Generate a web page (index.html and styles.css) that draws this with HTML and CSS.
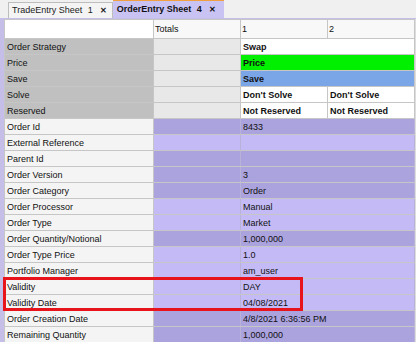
FILE: index.html
```html
<!DOCTYPE html>
<html lang="en">
<head>
    <meta charset="UTF-8">
    <title>OrderEntry</title>
    <link rel="stylesheet" href="styles.css">
</head>
<body>
<div class="tabs">
    <div class="tab">TradeEntry Sheet <span class="num">1</span><span class="close">&#x2715;</span></div>
    <div class="tab active">OrderEntry Sheet <span class="num">4</span><span class="close">&#x2715;</span></div>
</div>
<div class="sheet">
    <table class="grid">
        <colgroup>
            <col class="c-label">
            <col class="c-val">
            <col class="c-val">
            <col class="c-val">
        </colgroup>
        <tr class="head">
            <td class="hlabel"></td>
            <td>Totals</td>
            <td>1</td>
            <td>2</td>
        </tr>
        <tr class="top">
            <td class="label">Order Strategy</td><td class="tot"></td>
            <td colspan="2" class="white bold">Swap</td>
        </tr>
        <tr class="top">
            <td class="label">Price</td><td class="tot"></td>
            <td colspan="2" class="green bold">Price</td>
        </tr>
        <tr class="top">
            <td class="label">Save</td><td class="tot"></td>
            <td colspan="2" class="blue bold">Save</td>
        </tr>
        <tr class="top">
            <td class="label">Solve</td><td class="tot"></td>
            <td class="white bold">Don't Solve</td><td class="white bold">Don't Solve</td>
        </tr>
        <tr class="top">
            <td class="label">Reserved</td><td class="tot"></td>
            <td class="white bold">Not Reserved</td><td class="white bold">Not Reserved</td>
        </tr>
        <tr class="dark"><td class="label">Order Id</td><td></td><td colspan="2">8433</td></tr>
        <tr class="light"><td class="label">External Reference</td><td></td><td colspan="2"></td></tr>
        <tr class="dark"><td class="label">Parent Id</td><td></td><td colspan="2"></td></tr>
        <tr class="dark"><td class="label">Order Version</td><td></td><td colspan="2">3</td></tr>
        <tr class="dark"><td class="label">Order Category</td><td></td><td colspan="2">Order</td></tr>
        <tr class="light"><td class="label">Order Processor</td><td></td><td colspan="2">Manual</td></tr>
        <tr class="light"><td class="label">Order Type</td><td></td><td colspan="2">Market</td></tr>
        <tr class="dark"><td class="label">Order Quantity/Notional</td><td></td><td colspan="2">1,000,000</td></tr>
        <tr class="light"><td class="label">Order Type Price</td><td></td><td colspan="2">1.0</td></tr>
        <tr class="light"><td class="label">Portfolio Manager</td><td></td><td colspan="2">am_user</td></tr>
        <tr class="light"><td class="label">Validity</td><td></td><td colspan="2">DAY</td></tr>
        <tr class="light"><td class="label">Validity Date</td><td></td><td colspan="2">04/08/2021</td></tr>
        <tr class="dark"><td class="label">Order Creation Date</td><td></td><td colspan="2">4/8/2021 6:36:56 PM</td></tr>
        <tr class="dark"><td class="label">Remaining Quantity</td><td></td><td colspan="2">1,000,000</td></tr>
    </table>
    <div class="highlight"></div>
</div>
</body>
</html>
```

FILE: styles.css
```css
body {
    margin: 0;
    background: #f0f0f0;
    font-family: "Liberation Sans", Arial, sans-serif;
    font-size: 9px;
    color: #111;
    overflow: hidden;
}

.tabs {
    display: flex;
    align-items: flex-end;
    height: 18px;
    padding-left: 8px;
    border-bottom: 1px solid #c4bee8;
}

.tab {
    height: 15px;
    line-height: 15px;
    padding: 0 5px 0 3px;
    background: #f4f4f4;
    border: 1px solid #bdbdbd;
    border-bottom: none;
    font-size: 9px;
    color: #222;
}

.tab.active {
    height: 17px;
    line-height: 17px;
    background: #c9c3f4;
    border: none;
    border-top: 1px solid #f0a040;
    font-weight: bold;
    padding: 0 8px 0 4px;
    color: #111;
}

.num {
    margin-left: 3px;
}

.close {
    font-size: 8px;
    font-weight: bold;
    margin-left: 7px;
}

.sheet {
    position: relative;
    border-left: 4px solid #c4bee8;
    border-right: 2px solid #ddd;
    background: #f0f0f0;
}

.grid {
    border-collapse: collapse;
    table-layout: fixed;
    width: 410px;
}

.c-label {
    width: 149px;
}

.c-val {
    width: 87px;
}

.grid td {
    height: 15px;
    padding: 0 2px;
    border: 1px solid #c6c6c6;
    white-space: nowrap;
    overflow: hidden;
    vertical-align: middle;
}

.head td {
    height: 18px;
    background: #f8f8f8;
    padding: 0 1px;
}

.head .hlabel {
    background: #fff;
}

.white {
    background: #fff;
}

.green {
    background: #00f000;
}

.blue {
    background: #7aa6e8;
}

.bold {
    font-weight: bold;
}

.dark td,
.light td {
    border-color: #c6c6c6 #b8b2d8;
}

.dark td {
    background: #aba3de;
}

.light td {
    background: #c4bbf6;
}

.grid .label {
    background: #f4f4f4;
    border-color: #c6c6c6;
}

.top .label {
    background: #c0c0c0;
}

.top .tot {
    background: #e8e8e8;
}

.highlight {
    position: absolute;
    left: -1px;
    top: 258px;
    width: 294px;
    height: 28px;
    border: 3px solid #e8141c;
}
```
